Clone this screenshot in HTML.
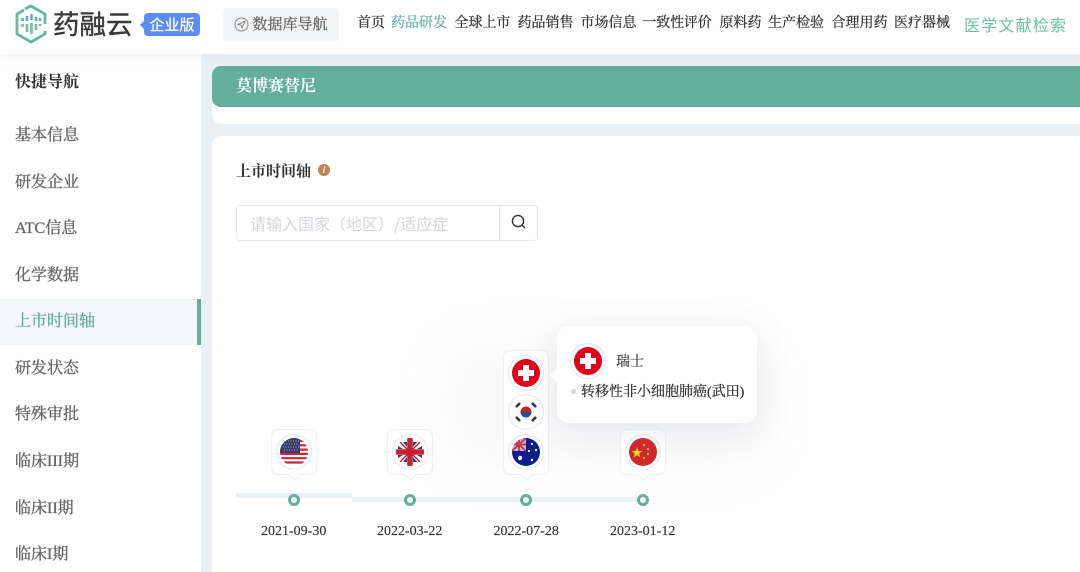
<!DOCTYPE html>
<html lang="zh"><head><meta charset="utf-8"><style>
html,body{margin:0;padding:0}
body{width:1080px;height:572px;overflow:hidden;position:relative;background:#ebf0f5;font-family:"Liberation Serif","Noto Serif CJK SC",serif;color:#333}
.a{position:absolute;white-space:nowrap}
.n{top:15px;font-size:14px;line-height:18px;color:#333;-webkit-text-stroke:.25px #333}
.s{left:15px;font-size:16px;line-height:22px;color:#666;-webkit-text-stroke:.35px #666}
.box{position:absolute;background:#fff;border:1px solid #edf0f5;border-radius:7px;box-sizing:border-box;width:46px}
.box:after{content:"";position:absolute;left:18px;bottom:-5px;width:8px;height:8px;background:#fff;border-right:1px solid #edf0f5;border-bottom:1px solid #edf0f5;transform:rotate(45deg)}
.f{position:absolute;width:34px;height:34px;border-radius:50%;background:#fff;box-shadow:0 0 0 1px #e3e7ee;overflow:hidden}
.f svg{position:absolute;left:3px;top:3px;width:28px;height:28px;display:block;border-radius:50%}
.d{position:absolute;top:494px;width:12px;height:12px;box-sizing:border-box;border:3px solid #64ae9e;border-radius:50%;background:#fff}
.t{font-size:14px;line-height:18px;color:#333;-webkit-text-stroke:.15px #333}
.l{position:absolute;height:5px;background:#ebf0f5}
</style></head><body>
<div class="a" style="left:0;top:0;width:1080px;height:54px;background:#fff;box-shadow:0 2px 10px rgba(200,208,218,.35);z-index:3"></div>
<div class="a" style="left:0;top:54px;width:201px;height:518px;background:#fff"></div>
<div style="position:absolute;z-index:4;left:0;top:0;width:1080px;height:54px">
<svg class="a" style="left:14px;top:4px" width="34" height="40" viewBox="0 0 34 40" fill="none"><path d="M10 6 3 10v20l14 8 14-8v-3" stroke="#66b8a2" stroke-width="2.800"/><path d="M11 5l6-3 14 8v10" stroke="#66b8a2" stroke-width="2.800"/><path d="M8.500 14v3M13 12v5M17.500 10v6M22 13v4M26 14v3" stroke="#5fa8e4" stroke-width="2.600"/><path d="M8.500 20v3M13 20v8M17.500 19v11M22 20v6M26 20v2" stroke="#72c0a8" stroke-width="2.600"/></svg>
<div class="a" style="left:53px;top:4px;font:400 26.500px/38px 'Noto Sans CJK SC',sans-serif;color:#3a3a3a;-webkit-text-stroke:.4px #3a3a3a">药融云</div>
<div class="a" style="left:144px;top:13px;width:56px;height:23px;background:#5b8df0;border-radius:4px;color:#fff;font:500 15px/23px 'Noto Sans CJK SC',sans-serif;text-align:center">企业版</div>
<div class="a" style="left:140px;top:21px;width:0;height:0;border:4px solid transparent;border-right-color:#5b8df0;border-left:0"></div>
<div class="a" style="left:223px;top:8px;width:116px;height:33px;background:#f2f3f4;border-radius:4px"></div>
<svg class="a" style="left:234px;top:17px" width="15" height="15" viewBox="0 0 15 15" fill="none" stroke="#8a8a8a"><circle cx="7.500" cy="7.500" r="6.500"/><path d="M3.800 7.600 11 4.200 8 11 7 8z" stroke-linejoin="round"/></svg>
<div class="a" style="left:252.500px;top:16px;font-size:15px;line-height:19px;color:#6b6b6b;-webkit-text-stroke:.3px #6b6b6b">数据库导航</div>
<div class="a n" style="left:357px">首页</div>
<div class="a n" style="left:391px;color:#64ae9e;-webkit-text-stroke-color:#64ae9e">药品研发</div>
<div class="a n" style="left:454.500px">全球上市</div>
<div class="a n" style="left:517.500px">药品销售</div>
<div class="a n" style="left:580.500px">市场信息</div>
<div class="a n" style="left:642.500px;letter-spacing:-.2px">一致性评价</div>
<div class="a n" style="left:719.500px">原料药</div>
<div class="a n" style="left:768px">生产检验</div>
<div class="a n" style="left:831.500px">合理用药</div>
<div class="a n" style="left:894px">医疗器械</div>
<div class="a" style="left:964px;top:12.500px;font:400 16px/22px 'Noto Sans CJK SC',sans-serif;letter-spacing:1.200px;color:#6cc0a4">医学文献检索</div>
</div>
<div class="a" style="left:15px;top:72px;font-size:16px;line-height:22px;color:#333;font-weight:700">快捷导航</div>
<div class="a s" style="top:125px">基本信息</div>
<div class="a s" style="top:172px">研发企业</div>
<div class="a s" style="top:218px">ATC信息</div>
<div class="a s" style="top:265px">化学数据</div>
<div class="a" style="left:0;top:299px;width:201px;height:46px;background:#f4f8f8"></div>
<div class="a" style="left:197px;top:299px;width:4px;height:46px;background:#64ae9e"></div>
<div class="a s" style="top:311px;color:#64ae9e;-webkit-text-stroke-color:#64ae9e">上市时间轴</div>
<div class="a s" style="top:358px">研发状态</div>
<div class="a s" style="top:404px">特殊审批</div>
<div class="a s" style="top:451px">临床III期</div>
<div class="a s" style="top:498px">临床II期</div>
<div class="a s" style="top:544px">临床I期</div>

<div class="a" style="left:212px;top:70px;width:868px;height:54px;background:#fff;border-radius:10px 0 0 10px"></div>
<div class="a" style="left:212px;top:66px;width:868px;height:41px;background:#64ae9e;border-radius:9px 0 0 9px"></div>
<div class="a" style="left:236px;top:76px;font-size:16px;line-height:21px;color:#fff;font-weight:700">莫博赛替尼</div>
<div class="a" style="left:212px;top:136px;width:868px;height:436px;background:#fff;border-radius:9px 0 0 0"></div>
<div class="a" style="left:236px;top:161.500px;font-size:15px;line-height:20px;color:#333;font-weight:700">上市时间轴</div>
<div class="a" style="left:318px;top:164px;width:12px;height:12px;border-radius:50%;background:#c08457;color:#fff;font:italic 700 9px/12px 'Liberation Serif',serif;text-align:center">i</div>
<div class="a" style="left:236px;top:205px;width:302px;height:36px;box-sizing:border-box;border:1px solid #e6e8ee;border-radius:4px"></div>
<div class="a" style="left:499px;top:205px;width:1px;height:36px;background:#e6e8ee"></div>
<div class="a" style="left:250px;top:212px;font:400 16px/22px 'Noto Sans CJK SC',sans-serif;color:#d4d6da">请输入国家（地区）/适应症</div>
<svg class="a" style="left:510px;top:213px" width="17" height="17" viewBox="0 0 17 17" fill="none" stroke="#333" stroke-width="1.400"><circle cx="8" cy="8" r="5.600"/><path d="M12.200 12.200 15 15"/></svg>

<div class="a" style="left:440px;top:340px;width:330px;height:130px;border-radius:40px;background:rgba(150,158,170,.06);filter:blur(22px)"></div>
<div class="l" style="left:236px;top:493px;width:116px"></div>
<div class="l" style="left:352px;top:497px;width:288px"></div>
<div class="d" style="left:288px"></div><div class="d" style="left:404px"></div><div class="d" style="left:520px"></div><div class="d" style="left:637px"></div>
<div class="a t" style="left:261px;top:523px">2021-09-30</div>
<div class="a t" style="left:377px;top:523px">2022-03-22</div>
<div class="a t" style="left:493.500px;top:523px">2022-07-28</div>
<div class="a t" style="left:610px;top:523px">2023-01-12</div>

<div class="box" style="left:271px;top:429px;height:46px"><div class="f" style="left:5px;top:5px"><svg viewBox="0 0 28 28"><rect width="28" height="28" fill="#fff"/><path d="M0 3h28M0 7.300h28M0 11.600h28M0 15.900h28M0 20.200h28M0 24.500h28" stroke="#c8263c" stroke-width="2.200"/><rect width="20" height="15" fill="#3c3b6e"/><path d="M3 3h16M4 6h15M3 9h16M4 12h15" stroke="#aab" stroke-width="1" stroke-dasharray="1 1.500"/></svg></div></div>
<div class="box" style="left:387px;top:429px;height:46px"><div class="f" style="left:5px;top:5px"><svg viewBox="0 0 28 28"><rect width="28" height="28" fill="#fff"/><path d="M7 4l4 5V4zM21 4l-4 5V4zM7 24l4-5v5zM21 24l-4-5v5zM2 8l5 3H2zM26 8l-5 3h5zM2 20l5-3H2zM26 20l-5-3h5z" fill="#2b3a80"/><path d="M4 4l20 20M24 4 4 24" stroke="#c8202f" stroke-width="1.400"/><path d="M14 0v28M0 14h28" stroke="#c8202f" stroke-width="5.500"/></svg></div></div>
<div class="box" style="left:503px;top:350px;height:125px">
<div class="f" style="left:5px;top:5px"><svg viewBox="0 0 28 28"><rect width="28" height="28" fill="#e3001b"/><path d="M11 6h6v5h5v6h-5v5h-6v-5H6v-6h5z" fill="#fff"/></svg></div>
<div class="f" style="left:5px;top:44px"><svg viewBox="0 0 28 28"><rect width="28" height="28" fill="#fff"/><path d="M8.500 14a5.500 5.500 0 0 1 11 0z" fill="#c8202f"/><path d="M8.500 14a5.500 5.500 0 0 0 11 0z" fill="#2b4a9b"/><path d="M4 9l4-4M4 19l4 4M20 5l4 4M20 23l4-4" stroke="#333" stroke-width="2.600"/></svg></div>
<div class="f" style="left:5px;top:84px"><svg viewBox="0 0 28 28"><rect width="28" height="28" fill="#0b1d8a"/><rect width="14" height="13" fill="#b8b8d8"/><path d="M7 0v13M0 6.500h14M0 0l14 13M14 0 0 13" stroke="#d0304a" stroke-width="1.800"/><g fill="#fff"><circle cx="8" cy="20" r="2.200"/><circle cx="20" cy="6" r="1.100"/><circle cx="24" cy="12" r="1.100"/><circle cx="17" cy="13" r="1.100"/><circle cx="20" cy="22" r="1.200"/></g></svg></div>
</div>
<div class="box" style="left:620px;top:429px;height:46px"><div class="f" style="left:5px;top:5px"><svg viewBox="0 0 28 28"><rect width="28" height="28" fill="#d0282b"/><path d="M8 9l1.300 4h4.200l-3.400 2.500 1.300 4L8 17l-3.400 2.500 1.300-4L2.500 13h4.200z" fill="#fcd920"/><g fill="#f0b820"><circle cx="15" cy="7" r="1.200"/><circle cx="19" cy="11" r="1.200"/><circle cx="19" cy="16" r="1.200"/><circle cx="15" cy="20" r="1.200"/></g></svg></div></div>

<div class="a" style="left:557px;top:326px;width:200px;height:97px;background:#fff;border-radius:12px;box-shadow:0 6px 36px rgba(120,130,145,.16)"></div>
<div class="a" style="left:552px;top:370px;width:11px;height:11px;background:#fff;transform:rotate(45deg)"></div>
<div class="f" style="left:571px;top:344px;z-index:2"><svg viewBox="0 0 28 28"><rect width="28" height="28" fill="#e3001b"/><path d="M11 6h6v5h5v6h-5v5h-6v-5H6v-6h5z" fill="#fff"/></svg></div>
<div class="a" style="left:616px;top:353px;font-size:14px;line-height:19px;color:#444;-webkit-text-stroke:.25px #444">瑞士</div>
<div class="a" style="left:571px;top:389px;width:5px;height:5px;border-radius:50%;background:#d8d8d8"></div>
<div class="a" style="left:581px;top:383px;font-size:14px;line-height:19px;color:#333;-webkit-text-stroke:.25px #333">转移性非小细胞肺癌(武田)</div>
</body></html>
